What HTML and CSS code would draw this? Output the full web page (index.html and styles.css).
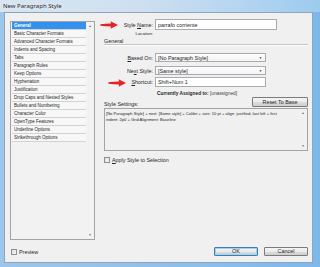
FILE: index.html
```html
<!DOCTYPE html>
<html lang="en">
<head>
    <meta charset="UTF-8">
    <title>New Paragraph Style</title>
    <link rel="stylesheet" href="styles.css">
</head>
<body>
    <div class="window">
        <div class="titlebar">
            <span class="title">New Paragraph Style</span>
        </div>
        <div class="client">
            <div class="side">
                <div class="listbox">
                    <ul class="cats">
                        <li class="selected">General</li>
                        <li>Basic Character Formats</li>
                        <li>Advanced Character Formats</li>
                        <li>Indents and Spacing</li>
                        <li>Tabs</li>
                        <li>Paragraph Rules</li>
                        <li>Keep Options</li>
                        <li>Hyphenation</li>
                        <li>Justification</li>
                        <li>Drop Caps and Nested Styles</li>
                        <li>Bullets and Numbering</li>
                        <li>Character Color</li>
                        <li>OpenType Features</li>
                        <li>Underline Options</li>
                        <li>Strikethrough Options</li>
                    </ul>
                    <div class="vscroll">
                        <span>&#9650;</span>
                        <span>&#9660;</span>
                    </div>
                </div>
                <div class="check preview">
                    <span class="box"></span>
                    <span>Preview</span>
                </div>
            </div>

            <div class="main">
                <!-- red arrows drawn over the screenshot -->
                <svg class="arrow arrow-name" viewBox="0 0 18 8">
                    <path d="M0.5 3.3 Q5 2.6 11 2.5 L10.6 0.3 L18 4 L10.6 7.7 L11 5.5 Q5 5.4 0.5 4.7 Q0 4 0.5 3.3 Z"/>
                </svg>
                <svg class="arrow arrow-shortcut" viewBox="0 0 18 8">
                    <path d="M0.5 3.3 Q5 2.6 11 2.5 L10.6 0.3 L18 4 L10.6 7.7 L11 5.5 Q5 5.4 0.5 4.7 Q0 4 0.5 3.3 Z"/>
                </svg>

                <div class="field-row name-row">
                    <span class="lbl">Style <u>N</u>ame:</span>
                    <div class="textbox wide">parrafo corriente</div>
                </div>
                <div class="field-row loc-row">
                    <span class="lbl small">Location:</span>
                    <span></span>
                </div>

                <div class="section-title">General</div>

                <div class="field-row based-row">
                    <span class="lbl"><u>B</u>ased On:</span>
                    <div class="dropdown">[No Paragraph Style]<span class="caret">&#9660;</span></div>
                </div>
                <div class="field-row next-row">
                    <span class="lbl">Ne<u>x</u>t Style:</span>
                    <div class="dropdown">[Same style]<span class="caret">&#9660;</span></div>
                </div>
                <div class="field-row shortcut-row">
                    <span class="lbl"><u>S</u>hortcut:</span>
                    <div class="textbox">Shift+Num 1</div>
                </div>
                <div class="field-row assigned-row">
                    <span></span>
                    <div class="assigned"><b>Currently Assigned to:</b> <span class="muted">[unassigned]</span></div>
                </div>

                <div class="settings-head">
                    <span>Style Settings:</span>
                    <button class="btn reset">Reset To Base</button>
                </div>
                <div class="settings-box">
                    <p>[No Paragraph Style] + next: [Same style] + Calibri + size: 10 pt + align: justified, last left + first<br>indent: 2p0 + Grid Alignment: Baseline</p>
                    <div class="mini-scroll">
                        <span>&#9650;</span>
                        <span>&#9660;</span>
                    </div>
                </div>

                <div class="check apply">
                    <span class="box"></span>
                    <span><u>A</u>pply Style to Selection</span>
                </div>

                <div class="footer">
                    <button class="btn default">OK</button>
                    <button class="btn">Cancel</button>
                </div>
            </div>
        </div>
    </div>
</body>
</html>
```

FILE: styles.css
```css
* {
    margin: 0;
    padding: 0;
    box-sizing: border-box;
}

body {
    width: 320px;
    height: 267px;
    overflow: hidden;
    font-family: 'Liberation Sans', Arial, sans-serif;
    color: #1f1f1f;
}

.window {
    width: 320px;
    height: 267px;
    background: linear-gradient(90deg, #9cc6ea 0%, #8bc0ec 60%, #7cb9ea 100%);
    display: flex;
    flex-direction: column;
}

.titlebar {
    height: 12px;
    display: flex;
    align-items: center;
    padding-left: 3px;
    background: linear-gradient(90deg, #d9e6f2 0%, #cddff0 45%, #b5d5f1 75%, #9ccbef 100%);
}

.title {
    font-family: 'Noto Sans', 'Liberation Sans', sans-serif;
    font-size: 6px;
    color: #1a1a1a;
    text-shadow: 0 0 2px #fff;
}

/* client area of the dialog */
.client {
    flex: 1;
    margin: 0 7px 4px 4px;
    background: #f0f0f0;
    border: 1px solid #8fa4b8;
    padding: 6px 4px 6px 5px;
    display: flex;
    gap: 9px;
}

.side {
    width: 85px;
    padding-top: 2px;
    display: flex;
    flex-direction: column;
}

.listbox {
    height: 219px;
    border: 1px solid #a3a3a3;
    background: #f2f2f2;
    display: flex;
}

.cats {
    list-style: none;
    flex: 1;
    padding: 0 0 0 1px;
}

.cats li {
    height: 8px;
    line-height: 7px;
    font-size: 4.5px;
    padding-left: 2px;
    border-bottom: 1px solid #d2d2d2;
    background: #f7f7f7;
    white-space: nowrap;
}

.cats li.selected {
    background: #3392f0;
    color: #fff;
    font-weight: bold;
}

.vscroll {
    width: 8px;
    display: flex;
    flex-direction: column;
    justify-content: space-between;
    align-items: center;
    font-size: 3px;
    color: #555;
    padding: 2px 0;
}

.check {
    display: flex;
    align-items: center;
    gap: 2px;
    font-size: 5.4px;
    height: 9px;
}

.check .box {
    width: 6px;
    height: 6px;
    border: 1px solid #8e8f8f;
    background: linear-gradient(135deg, #dcdcdc, #f8f8f8);
}

.preview {
    margin-top: 7px;
    padding-left: 1px;
}

.main {
    width: 204px;
    display: flex;
    flex-direction: column;
    position: relative;
    font-size: 5.4px;
}

.arrow {
    position: absolute;
    width: 18px;
    height: 8px;
    fill: #e4222a;
}

.arrow-name {
    left: -4px;
    top: 2px;
}

.arrow-shortcut {
    left: 3px;
    top: 60px;
    width: 20px;
}

.field-row {
    display: grid;
    grid-template-columns: 49px auto;
    column-gap: 2px;
    align-items: center;
}

.lbl {
    text-align: right;
    white-space: nowrap;
}

.lbl.small {
    font-size: 4.3px;
}

.textbox,
.dropdown {
    height: 100%;
    border: 1px solid #a9abb0;
    background: #fff;
    padding-left: 2px;
    display: flex;
    align-items: center;
    white-space: nowrap;
}

.textbox {
    width: 111px;
}

.textbox.wide {
    width: 122px;
}

.dropdown {
    width: 111px;
    justify-content: space-between;
    padding-right: 3px;
    background: linear-gradient(#fdfdfd, #f3f3f3);
}

.caret {
    font-size: 3px;
    color: #111;
}

.name-row {
    height: 11px;
}

.loc-row {
    height: 5px;
    margin-top: 1px;
}

.section-title {
    margin-top: 2px;
    height: 7px;
    line-height: 6px;
    border-bottom: 1px solid #c4c4c4;
    box-shadow: 0 1px 0 #fff;
}

.based-row {
    height: 9px;
    margin-top: 8px;
}

.next-row {
    height: 9px;
    margin-top: 4px;
}

.shortcut-row {
    height: 10px;
    margin-top: 2px;
}

.assigned-row {
    height: 6px;
    margin-top: 3px;
}

.assigned {
    font-size: 4.8px;
    padding-left: 2px;
    white-space: nowrap;
}

.muted {
    font-weight: normal;
    color: #444;
}

.settings-head {
    margin-top: 1px;
    height: 10px;
    display: flex;
    justify-content: space-between;
    align-items: flex-end;
}

.btn {
    font-family: 'Liberation Sans', Arial, sans-serif;
    font-size: 5.4px;
    color: #1f1f1f;
    border: 1px solid #7a7a7a;
    border-radius: 1px;
    background: linear-gradient(#f4f4f4 0%, #ebebeb 50%, #dcdcdc 51%, #cfcfcf 100%);
    height: 10px;
    line-height: 8px;
}

.reset {
    width: 56px;
}

.settings-box {
    margin-top: 1px;
    height: 43px;
    border: 1px solid #a3a3a3;
    background: #f0f0f0;
    display: flex;
    padding: 2px 1px 2px 1px;
}

.settings-box p {
    flex: 1;
    font-size: 4.1px;
    line-height: 5.5px;
    white-space: nowrap;
}

.mini-scroll {
    width: 6px;
    display: flex;
    flex-direction: column;
    justify-content: space-between;
    align-items: center;
    font-size: 3px;
    color: #555;
}

.apply {
    margin-top: 5px;
    height: 8px;
    padding-left: -1px;
}

.footer {
    margin-top: auto;
    display: flex;
    justify-content: flex-end;
    gap: 6px;
}

.footer .btn {
    width: 44px;
    height: 9px;
    line-height: 7px;
}

.footer .default {
    border-color: #3c7fb1;
    box-shadow: inset 0 0 0 1px #9ed2f2;
}
```
